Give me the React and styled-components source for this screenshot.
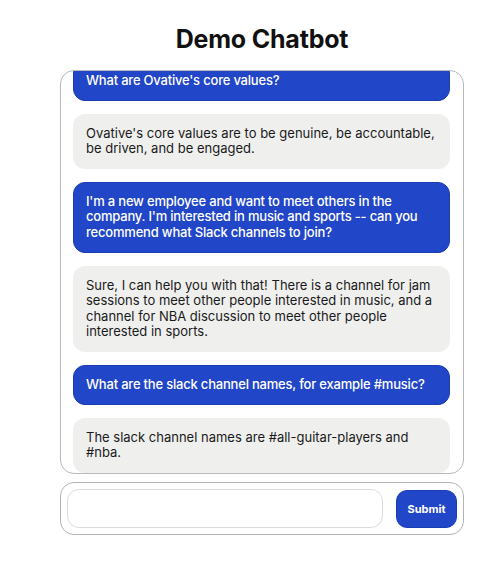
import React, { useLayoutEffect, useRef } from "react";
import styled, { createGlobalStyle } from "styled-components";

const GlobalStyle = createGlobalStyle`
  html, body { margin: 0; padding: 0; background: #ffffff; }
  body { font-family: Inter, "Noto Sans", sans-serif; color: #111; }
  * { box-sizing: border-box; }
`;

const Page = styled.div`
  display: flex;
  flex-direction: column;
  align-items: center;
  padding: 24px 0 0 24px;
`;

const Title = styled.h1`
  margin: 0 0 16px;
  font-size: 25px;
  line-height: 30px;
  font-weight: 700;
  color: #111;
  letter-spacing: -0.2px;
`;

const ChatBox = styled.div`
  width: 404px;
  height: 404px;
  border: 1px solid #b9b9b9;
  border-radius: 14px;
  overflow: hidden;
  display: flex;
  flex-direction: column;
  gap: 13px;
  padding: 12px 13px 0 12px;
`;

const Bubble = styled.div`
  flex-shrink: 0;
  border-radius: 12px;
  padding: ${(p) => (p.$user ? "11px 12px" : "12px 13px")};
  font-size: 13px;
  line-height: 15.6px;
  background: ${(p) => (p.$user ? "#2146c7" : "#efefee")};
  color: ${(p) => (p.$user ? "#ffffff" : "#1a1a1a")};
  font-weight: ${(p) => (p.$user ? 500 : 400)};
  letter-spacing: ${(p) => (p.$user ? "-0.2px" : "0")};
  border: ${(p) => (p.$user ? "1px solid #1a3cb5" : "none")};
`;

const InputBar = styled.form`
  width: 404px;
  margin-top: 8px;
  border: 1px solid #b3b3b3;
  border-radius: 14px;
  padding: 6px;
  display: flex;
  align-items: center;
  gap: 13px;
`;

const TextInput = styled.input`
  flex: 1;
  height: 39px;
  border: 1px solid #dcdcdc;
  border-radius: 12px;
  padding: 0 12px;
  font-family: inherit;
  font-size: 13px;
  outline: none;
`;

const SubmitButton = styled.button`
  width: 61px;
  height: 38px;
  background: #2146c7;
  border: 1px solid #1a3cb5;
  border-radius: 11px;
  color: #fff;
  font-family: inherit;
  font-weight: 700;
  font-size: 11px;
  cursor: pointer;
`;

const messages = [
  { user: true, text: "What are Ovative's core values?" },
  { user: false, text: "Ovative's core values are to be genuine, be accountable, be driven, and be engaged." },
  { user: true, text: "I'm a new employee and want to meet others in the company. I'm interested in music and sports -- can you recommend what Slack channels to join?" },
  { user: false, text: "Sure, I can help you with that! There is a channel for jam sessions to meet other people interested in music, and a channel for NBA discussion to meet other people interested in sports." },
  { user: true, text: "What are the slack channel names, for example #music?" },
  { user: false, text: "The slack channel names are #all-guitar-players and #nba." },
];

export default function App() {
  const ref = useRef(null);
  useLayoutEffect(() => {
    if (ref.current) ref.current.scrollTop = ref.current.scrollHeight;
  }, []);
  return (
    <>
      <GlobalStyle />
      <Page>
        <Title>Demo Chatbot</Title>
        <ChatBox ref={ref}>
          {messages.map((m, i) => (
            <Bubble key={i} $user={m.user}>{m.text}</Bubble>
          ))}
        </ChatBox>
        <InputBar onSubmit={(e) => e.preventDefault()}>
          <TextInput type="text" />
          <SubmitButton type="submit">Submit</SubmitButton>
        </InputBar>
      </Page>
    </>
  );
}
